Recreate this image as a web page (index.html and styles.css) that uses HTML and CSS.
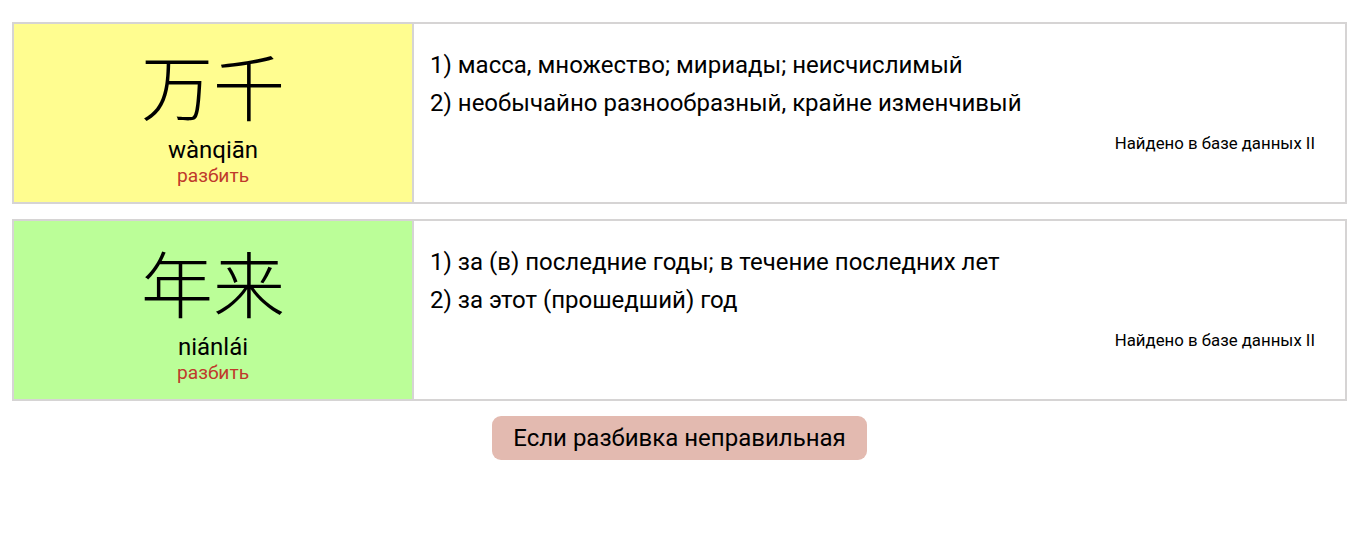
FILE: index.html
```html
<!DOCTYPE html>
<html lang="ru">
<head>
<meta charset="utf-8">
<link rel="stylesheet" href="styles.css">
</head>
<body>
<div class="page">
  <div class="card">
    <div class="word word-yellow">
      <div class="hanzi">万千</div>
      <div class="pinyin">wànqiān</div>
      <a class="split">разбить</a>
    </div>
    <div class="meaning">
      <div class="def">1) масса, множество; мириады; неисчислимый</div>
      <div class="def">2) необычайно разнообразный, крайне изменчивый</div>
      <div class="source">Найдено в базе данных II</div>
    </div>
  </div>
  <div class="card">
    <div class="word word-green">
      <div class="hanzi">年来</div>
      <div class="pinyin">niánlái</div>
      <a class="split">разбить</a>
    </div>
    <div class="meaning">
      <div class="def">1) за (в) последние годы; в течение последних лет</div>
      <div class="def">2) за этот (прошедший) год</div>
      <div class="source">Найдено в базе данных II</div>
    </div>
  </div>
  <div class="actions">
    <button class="wrong">Если разбивка неправильная</button>
  </div>
</div>
</body>
</html>
```
FILE: styles.css
```css
html, body {
  margin: 0;
  padding: 0;
  background: #fff;
}
body {
  font-family: Roboto, "Liberation Sans", "Noto Sans CJK SC", sans-serif;
  color: #000;
}
.page {
  padding: 22px 4px 0 12px;
  display: flex;
  flex-direction: column;
  gap: 15px;
}
.card {
  display: flex;
  border: 2px solid #d6d4d4;
  height: 178px;
}
.word {
  width: 400px;
  border-right: 2px solid #d6d4d4;
  display: flex;
  flex-direction: column;
  align-items: center;
  padding-top: 18px;
  box-sizing: border-box;
}
.word-yellow { background: #fffd90; }
.word-green { background: #bbfe98; }
.hanzi {
  font-family: "Noto Sans CJK SC", sans-serif;
  font-size: 72px;
  font-weight: 300;
  line-height: 84px;
}
.pinyin {
  font-size: 24px;
  line-height: 28px;
  margin-top: 10px;
}
.split {
  color: #c0392b;
  font-size: 19.2px;
  line-height: 24px;
}
.meaning {
  flex: 1;
  padding: 22px 30px 0 16px;
  display: flex;
  flex-direction: column;
}
.def {
  font-size: 24px;
  line-height: 38px;
}
.source {
  align-self: flex-end;
  font-size: 16.8px;
  line-height: 20px;
  margin-top: 11px;
}
.actions {
  display: flex;
  justify-content: center;
}
.wrong {
  background: #e3bab0;
  border: none;
  border-radius: 9px;
  font-family: Roboto, "Liberation Sans", sans-serif;
  font-size: 24px;
  color: #000;
  height: 44px;
  padding: 0 21px;
}
```
